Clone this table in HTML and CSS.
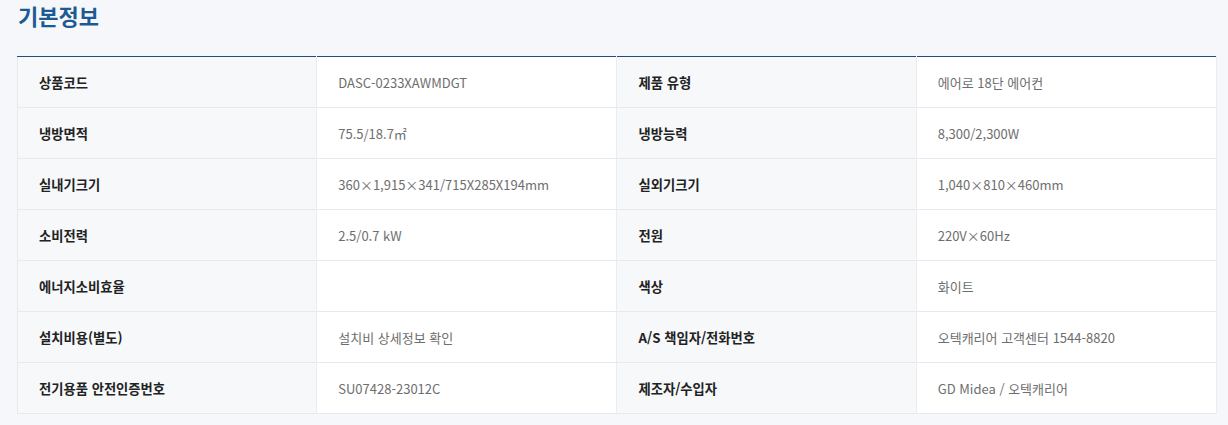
FILE: index.html
```html
<!DOCTYPE html>
<html lang="ko">
<head>
<meta charset="utf-8">
<link rel="stylesheet" href="styles.css">
</head>
<body>
<section class="info">
  <h2 class="info-title">기본정보</h2>
  <table class="spec">
    <tbody>
      <tr><th>상품코드</th><td>DASC-0233XAWMDGT</td><th>제품 유형</th><td>에어로 18단 에어컨</td></tr>
      <tr><th>냉방면적</th><td>75.5/18.7㎡</td><th>냉방능력</th><td>8,300/2,300W</td></tr>
      <tr><th>실내기크기</th><td>360×1,915×341/715X285X194mm</td><th>실외기크기</th><td>1,040×810×460mm</td></tr>
      <tr><th>소비전력</th><td>2.5/0.7 kW</td><th>전원</th><td>220V×60Hz</td></tr>
      <tr><th>에너지소비효율</th><td></td><th>색상</th><td>화이트</td></tr>
      <tr><th>설치비용(별도)</th><td>설치비 상세정보 확인</td><th>A/S 책임자/전화번호</th><td>오텍캐리어 고객센터 1544-8820</td></tr>
      <tr><th>전기용품 안전인증번호</th><td>SU07428-23012C</td><th>제조자/수입자</th><td>GD Midea / 오텍캐리어</td></tr>
    </tbody>
  </table>
</section>
</body>
</html>
```

FILE: styles.css
```css
html, body {
  margin: 0;
  padding: 0;
  background: #f5f7fa;
  font-family: "Noto Sans CJK KR", "Noto Sans", sans-serif;
}
.info {
  padding: 0 0 0 17px;
}
.info-title {
  margin: 0;
  padding: 0 0 0 1px;
  height: 56px;
  font-size: 22px;
  line-height: 30px;
  font-weight: 700;
  color: #1d5a94;
}
.spec {
  width: 1200px;
  border-collapse: collapse;
  table-layout: fixed;
  border-top: 1px solid #1f4e78;
  border-left: 1px solid #e6eaee;
  border-right: 1px solid #e6eaee;
}
.spec tr {
  border-bottom: 1px solid #e6eaee;
}
.spec th, .spec td {
  height: 50px;
  padding: 0 0 0 21px;
  text-align: left;
  vertical-align: middle;
  border-right: 1px solid #e9edf1;
}
.spec th {
  background: #f6f8fa;
  font-size: 13.3px;
  font-weight: 700;
  color: #222;
  width: 277px;
}
.spec td {
  background: #fff;
  font-size: 13px;
  font-weight: 400;
  color: #6e6e6e;
  width: 278px;
}
```
